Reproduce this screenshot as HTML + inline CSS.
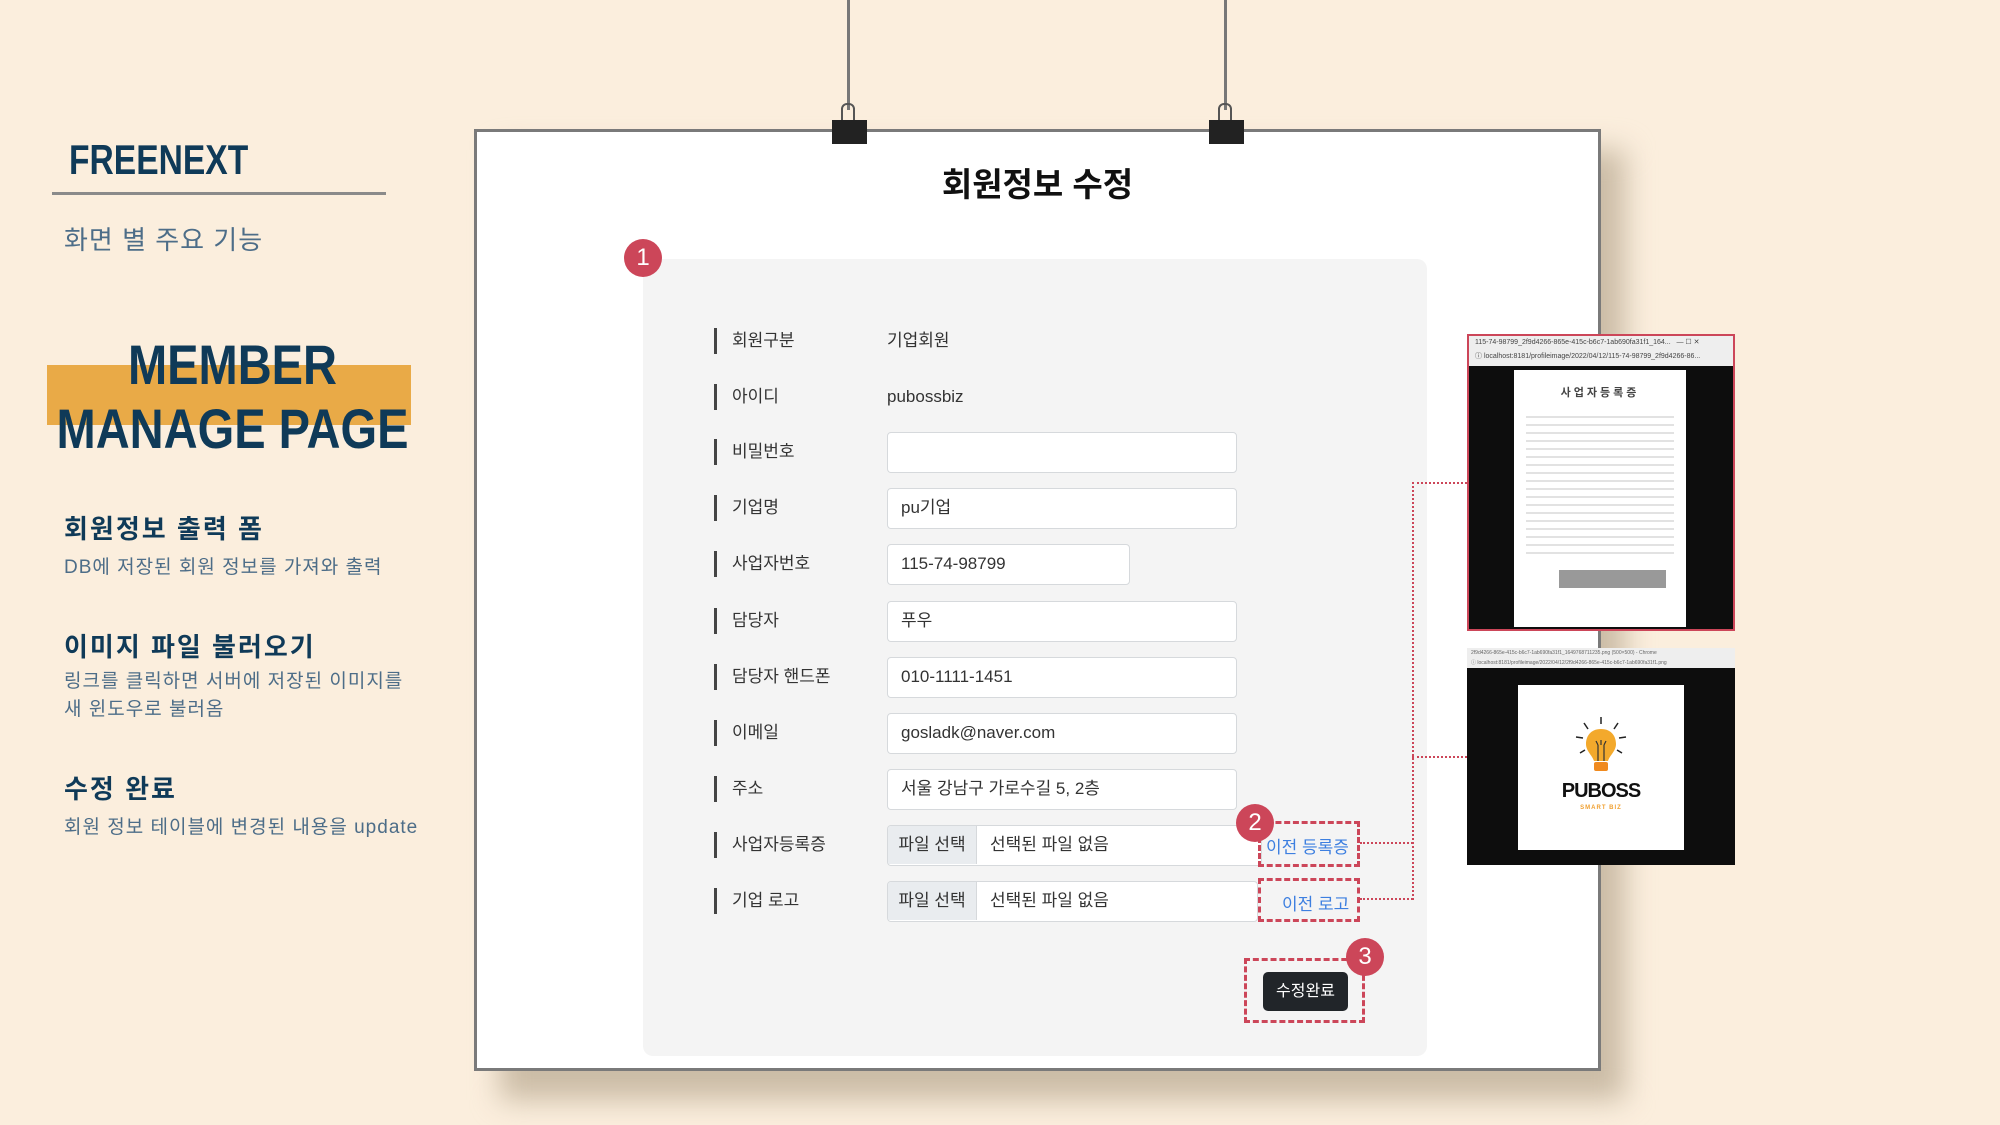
<!DOCTYPE html>
<html><head><meta charset="utf-8">
<style>
*{margin:0;padding:0;box-sizing:border-box}
body{width:2000px;height:1125px;background:#fbeedd;position:relative;overflow:hidden;font-family:"Liberation Sans","Noto Sans CJK KR",sans-serif}
.a{position:absolute}
.navy{color:#0f3a58}
.sub{color:#4d6d88}
.lbl{position:absolute;left:714px;height:26px;border-left:3px solid #444;padding-left:15px;font-size:17px;color:#333;line-height:26px}
.val{position:absolute;left:887px;font-size:17px;color:#333;line-height:26px}
.inp{position:absolute;left:887px;width:350px;height:41px;background:#fff;border:1.5px solid #d6d9dc;border-radius:4px;font-size:17px;color:#333;padding-left:13px;line-height:38px}
.file{position:absolute;left:887px;width:375px;height:41px;background:#fff;border:1.5px solid #d6d9dc;border-radius:4px;font-size:17px;color:#333;line-height:38px;overflow:hidden}
.file span{display:inline-block;width:89px;background:#e9ecef;border-right:1.5px solid #d6d9dc;text-align:center;margin-right:13px}
.badge{position:absolute;width:38px;height:38px;border-radius:50%;background:#cc4659;color:#fff;font-size:24px;text-align:center;line-height:38px}
.dash{position:absolute;border:3px dashed #cc4659}
.dot{position:absolute;border-color:#cc4659;border-style:dotted;border-width:0}
</style></head><body>

<div class="a navy" style="left:69px;top:136px;font-size:42px;font-weight:bold;transform:scaleX(0.8);transform-origin:left;white-space:nowrap">FREENEXT</div>
<div class="a" style="left:52px;top:192px;width:334px;height:3px;background:#8a8a8a"></div>
<div class="a sub" style="left:64px;top:220px;font-size:26px;letter-spacing:1px">화면 별 주요 기능</div>

<div class="a" style="left:47px;top:365px;width:364px;height:60px;background:#e9aa47"></div>
<div class="a navy" style="left:-20px;top:333px;width:505px;text-align:center;font-size:56px;font-weight:bold;line-height:64px;white-space:nowrap;transform:scaleX(0.84)">MEMBER<br>MANAGE PAGE</div>

<div class="a navy" style="left:64px;top:509px;font-size:26px;font-weight:bold;letter-spacing:2px">회원정보 출력 폼</div>
<div class="a sub" style="left:64px;top:552px;font-size:19px;letter-spacing:1px">DB에 저장된 회원 정보를 가져와 출력</div>
<div class="a navy" style="left:64px;top:627px;font-size:26px;font-weight:bold;letter-spacing:2px">이미지 파일 불러오기</div>
<div class="a sub" style="left:64px;top:668px;font-size:19px;letter-spacing:1px;line-height:28px">링크를 클릭하면 서버에 저장된 이미지를<br>새 윈도우로 불러옴</div>
<div class="a navy" style="left:64px;top:769px;font-size:26px;font-weight:bold;letter-spacing:2px">수정 완료</div>
<div class="a sub" style="left:64px;top:812px;font-size:19px;letter-spacing:1px">회원 정보 테이블에 변경된 내용을 update</div>

<div class="a" style="left:500px;top:150px;width:1125px;height:950px;background:#cbbca6;filter:blur(14px)"></div>
<div class="a" style="left:474px;top:129px;width:1127px;height:942px;background:#fff;border:3px solid #7a7a7a"></div>
<div class="a" style="left:847px;top:0;width:3px;height:110px;background:#777"></div>
<div class="a" style="left:1224px;top:0;width:3px;height:110px;background:#777"></div>
<div class="a" style="left:841px;top:103px;width:14px;height:20px;border:2px solid #555;border-radius:6px 6px 2px 2px"></div>
<div class="a" style="left:1218px;top:103px;width:14px;height:20px;border:2px solid #555;border-radius:6px 6px 2px 2px"></div>
<div class="a" style="left:832px;top:120px;width:35px;height:24px;background:#222"></div>
<div class="a" style="left:1209px;top:120px;width:35px;height:24px;background:#222"></div>

<div class="a" style="left:474px;top:158px;width:1127px;text-align:center;font-size:33px;font-weight:bold;color:#111">회원정보 수정</div>

<div class="a" style="left:643px;top:259px;width:784px;height:797px;background:#f4f4f4;border-radius:10px"></div>
<div class="badge" style="left:624px;top:239px">1</div>

<div class="lbl" style="top:328px">회원구분</div><div class="val" style="top:328px">기업회원</div>
<div class="lbl" style="top:384px">아이디</div><div class="val" style="top:384px">pubossbiz</div>
<div class="lbl" style="top:439px">비밀번호</div><div class="inp" style="top:432px"></div>
<div class="lbl" style="top:495px">기업명</div><div class="inp" style="top:488px">pu기업</div>
<div class="lbl" style="top:551px">사업자번호</div><div class="inp" style="top:544px;width:243px">115-74-98799</div>
<div class="lbl" style="top:608px">담당자</div><div class="inp" style="top:601px">푸우</div>
<div class="lbl" style="top:664px">담당자 핸드폰</div><div class="inp" style="top:657px">010-1111-1451</div>
<div class="lbl" style="top:720px">이메일</div><div class="inp" style="top:713px">gosladk@naver.com</div>
<div class="lbl" style="top:776px">주소</div><div class="inp" style="top:769px">서울 강남구 가로수길 5, 2층</div>
<div class="lbl" style="top:832px">사업자등록증</div><div class="file" style="top:825px"><span>파일 선택</span>선택된 파일 없음</div>
<div class="lbl" style="top:888px">기업 로고</div><div class="file" style="top:881px;width:371px"><span>파일 선택</span>선택된 파일 없음</div>

<div class="dash" style="left:1258px;top:821px;width:102px;height:46px"></div>
<div class="a" style="left:1266px;top:833px;font-size:17px;color:#3d7fe0">이전 등록증</div>
<div class="dash" style="left:1258px;top:878px;width:102px;height:44px"></div>
<div class="a" style="left:1282px;top:890px;font-size:17px;color:#3d7fe0">이전 로고</div>
<div class="badge" style="left:1236px;top:804px">2</div>

<div class="dash" style="left:1244px;top:958px;width:121px;height:65px"></div>
<div class="a" style="left:1263px;top:972px;width:85px;height:39px;background:#212529;border-radius:5px;color:#fff;font-size:16px;text-align:center;line-height:39px">수정완료</div>
<div class="badge" style="left:1346px;top:938px">3</div>

<div class="dot" style="left:1360px;top:842px;width:53px;border-top-width:2px"></div>
<div class="dot" style="left:1360px;top:898px;width:53px;border-top-width:2px"></div>
<div class="dot" style="left:1412px;top:482px;height:418px;border-left-width:2px"></div>
<div class="dot" style="left:1412px;top:482px;width:55px;border-top-width:2px"></div>
<div class="dot" style="left:1412px;top:756px;width:55px;border-top-width:2px"></div>

<div class="a" style="left:1467px;top:334px;width:268px;height:297px;background:#0d0d0d;border:2px solid #cc4659"></div>
<div class="a" style="left:1469px;top:336px;width:264px;height:30px;background:#eee;font-size:7px;color:#444;line-height:14px;padding-left:6px;white-space:nowrap;overflow:hidden">115-74-98799_2f9d4266-865e-415c-b6c7-1ab690fa31f1_164... &nbsp; — ☐ ✕<br>ⓘ localhost:8181/profileimage/2022/04/12/115-74-98799_2f9d4266-86...</div>
<div class="a" style="left:1514px;top:370px;width:172px;height:257px;background:#fff;font-size:8px;color:#444;text-align:center;padding-top:14px">
<div style="font-size:11px;font-weight:bold;letter-spacing:3px">사업자등록증</div>
<div style="height:150px;margin:10px 12px;background:repeating-linear-gradient(#fff 0 6px,#e2e2e2 6px 8px)"></div>
<div style="margin:10px 20px 0 45px;height:18px;background:#999"></div>
</div>

<div class="a" style="left:1467px;top:648px;width:268px;height:217px;background:#0d0d0d"></div>
<div class="a" style="left:1467px;top:648px;width:268px;height:20px;background:#eee;font-size:5px;color:#666;line-height:10px;padding-left:4px;white-space:nowrap;overflow:hidden">2f9d4266-865e-415c-b6c7-1ab690fa31f1_1649768711235.png (500×500) - Chrome<br>ⓘ localhost:8181/profileimage/2022/04/12/2f9d4266-865e-415c-b6c7-1ab690fa31f1.png</div>
<div class="a" style="left:1518px;top:685px;width:166px;height:165px;background:#fff"></div>
<svg class="a" style="left:1570px;top:715px" width="62" height="70" viewBox="0 0 62 70">
<g stroke="#222" stroke-width="1.5"><line x1="31" y1="2" x2="31" y2="9"/><line x1="14" y1="8" x2="18" y2="14"/><line x1="48" y1="8" x2="44" y2="14"/><line x1="6" y1="22" x2="13" y2="23"/><line x1="56" y1="22" x2="49" y2="23"/><line x1="10" y1="38" x2="15" y2="35"/><line x1="52" y1="38" x2="47" y2="35"/></g>
<path d="M31 14c-11 0-15 8-15 15 0 7 6 11 8 17h14c2-6 8-10 8-17 0-7-4-15-15-15z" fill="#f3a92c"/>
<rect x="24" y="47" width="14" height="9" rx="2" fill="#f08a1e"/>
<path d="M28 46V30M34 46V30M28 30l-2-4M31 30v-5M34 30l2-4" stroke="#333" stroke-width="1.2" fill="none"/>
</svg>
<div class="a" style="left:1518px;top:780px;width:166px;text-align:center;font-size:20px;font-weight:bold;color:#111;letter-spacing:-1px">PUBOSS</div>
<div class="a" style="left:1518px;top:805px;width:166px;text-align:center;font-size:6px;font-weight:bold;color:#f0a030;letter-spacing:1px">SMART BIZ</div>

</body></html>
